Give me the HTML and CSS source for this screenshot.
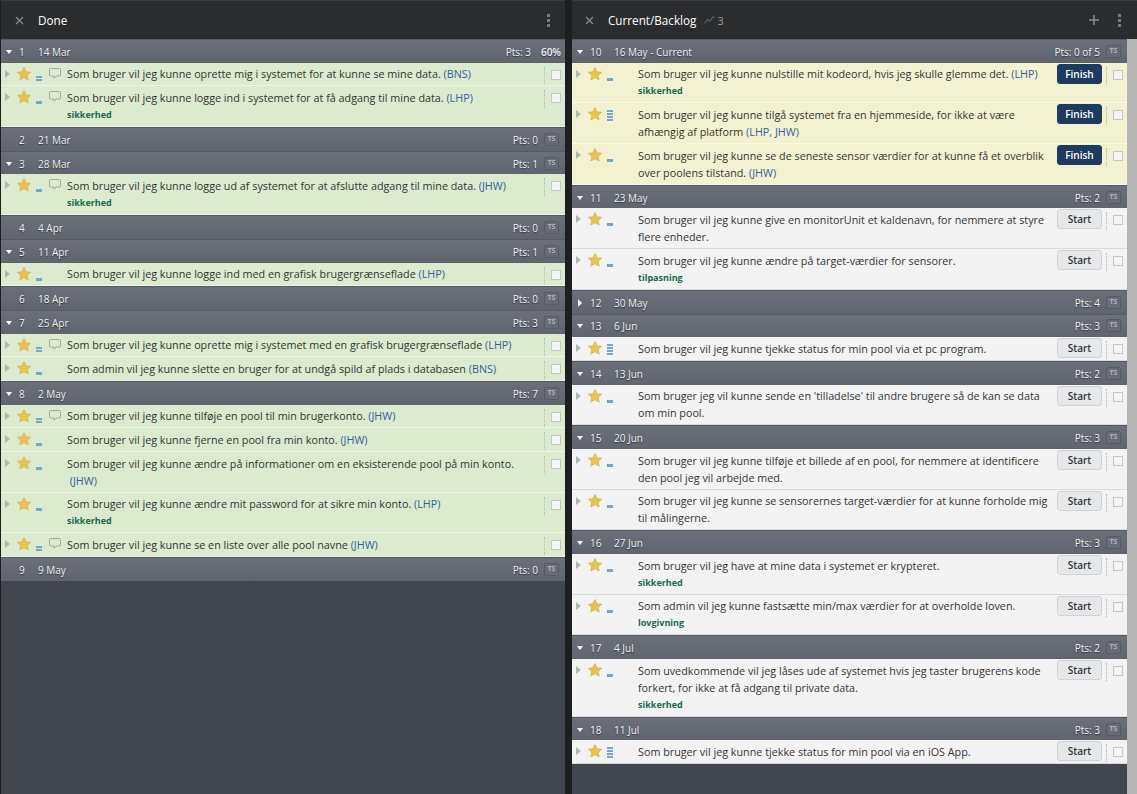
FILE: index.html
```html
<!DOCTYPE html>
<html lang="en">
<head>
    <meta charset="UTF-8">
    <title>Planning board</title>
    <link rel="stylesheet" href="styles.css">
</head>
<body>
    <svg class="defs" width="0" height="0">
        <symbol id="star" viewBox="0 0 14 14">
            <polygon points="7,0.600 9,4.800 13.600,5.300 10.200,8.400 11.200,13 7,10.700 2.800,13 3.800,8.400 0.400,5.300 5,4.800" fill="#e6c452" stroke="#d8b545" stroke-width="0.800" stroke-linejoin="round"/>
        </symbol>
        <symbol id="bubble" viewBox="0 0 12 11">
            <path d="M1.500 .5h9a1 1 0 0 1 1 1v5.500a1 1 0 0 1-1 1H7L5 10.300V8H1.500a1 1 0 0 1-1-1V1.500a1 1 0 0 1 1-1z" fill="none" stroke="#a3a8a3"/>
        </symbol>
        <symbol id="close" viewBox="0 0 9 9">
            <path d="M1 1l7 7M8 1L1 8" stroke="#8a8c90" stroke-width="1.200" fill="none"/>
        </symbol>
    </svg>

    <div class="board">
        <section class="panel panel-done">
            <header class="panel-head">
                <svg class="head-close"><use href="#close"/></svg>
                <span class="panel-title">Done</span>
                <span class="kebab"><i></i><i></i><i></i></span>
            </header>
            <div class="panel-body">
                <div class="sprint-list">
                    <div class="sprint-head"><span class="caret-down"></span><span class="num">1</span><span class="date">14 Mar</span><span class="pts">Pts: 3</span><span class="pct">60%</span></div>
                    <div class="row green"><span class="arrow"></span><svg class="star"><use href="#star"/></svg><span class="est"><i></i><i></i></span><svg class="bubble"><use href="#bubble"/></svg><div class="row-body">Som bruger vil jeg kunne oprette mig i systemet for at kunne se mine data. <a>(BNS)</a></div><span class="dots"></span><span class="check"></span></div>
                    <div class="row green"><span class="arrow"></span><svg class="star"><use href="#star"/></svg><span class="est"><i></i></span><svg class="bubble"><use href="#bubble"/></svg><div class="row-body">Som bruger vil jeg kunne logge ind i systemet for at få adgang til mine data. <a>(LHP)</a><div class="tag">sikkerhed</div></div><span class="dots"></span><span class="check"></span></div>

                    <div class="sprint-head closed"><span class="caret-none"></span><span class="num">2</span><span class="date">21 Mar</span><span class="pts">Pts: 0</span><span class="ts">TS</span></div>

                    <div class="sprint-head"><span class="caret-down"></span><span class="num">3</span><span class="date">28 Mar</span><span class="pts">Pts: 1</span><span class="ts">TS</span></div>
                    <div class="row green"><span class="arrow"></span><svg class="star"><use href="#star"/></svg><span class="est"><i></i></span><svg class="bubble"><use href="#bubble"/></svg><div class="row-body">Som bruger vil jeg kunne logge ud af systemet for at afslutte adgang til mine data. <a>(JHW)</a><div class="tag">sikkerhed</div></div><span class="dots"></span><span class="check"></span></div>

                    <div class="sprint-head closed"><span class="caret-none"></span><span class="num">4</span><span class="date">4 Apr</span><span class="pts">Pts: 0</span><span class="ts">TS</span></div>

                    <div class="sprint-head"><span class="caret-down"></span><span class="num">5</span><span class="date">11 Apr</span><span class="pts">Pts: 1</span><span class="ts">TS</span></div>
                    <div class="row green"><span class="arrow"></span><svg class="star"><use href="#star"/></svg><span class="est"><i></i></span><span class="no-bubble"></span><div class="row-body">Som bruger vil jeg kunne logge ind med en grafisk brugergrænseflade <a>(LHP)</a></div><span class="dots"></span><span class="check"></span></div>

                    <div class="sprint-head closed"><span class="caret-none"></span><span class="num">6</span><span class="date">18 Apr</span><span class="pts">Pts: 0</span><span class="ts">TS</span></div>

                    <div class="sprint-head"><span class="caret-down"></span><span class="num">7</span><span class="date">25 Apr</span><span class="pts">Pts: 3</span><span class="ts">TS</span></div>
                    <div class="row green"><span class="arrow"></span><svg class="star"><use href="#star"/></svg><span class="est"><i></i><i></i></span><svg class="bubble"><use href="#bubble"/></svg><div class="row-body">Som bruger vil jeg kunne oprette mig i systemet med en grafisk brugergrænseflade <a>(LHP)</a></div><span class="dots"></span><span class="check"></span></div>
                    <div class="row green"><span class="arrow"></span><svg class="star"><use href="#star"/></svg><span class="est"><i></i></span><span class="no-bubble"></span><div class="row-body">Som admin vil jeg kunne slette en bruger for at undgå spild af plads i databasen <a>(BNS)</a></div><span class="dots"></span><span class="check"></span></div>

                    <div class="sprint-head"><span class="caret-down"></span><span class="num">8</span><span class="date">2 May</span><span class="pts">Pts: 7</span><span class="ts">TS</span></div>
                    <div class="row green"><span class="arrow"></span><svg class="star"><use href="#star"/></svg><span class="est"><i></i><i></i></span><svg class="bubble"><use href="#bubble"/></svg><div class="row-body">Som bruger vil jeg kunne tilføje en pool til min brugerkonto. <a>(JHW)</a></div><span class="dots"></span><span class="check"></span></div>
                    <div class="row green"><span class="arrow"></span><svg class="star"><use href="#star"/></svg><span class="est"><i></i></span><span class="no-bubble"></span><div class="row-body">Som bruger vil jeg kunne fjerne en pool fra min konto. <a>(JHW)</a></div><span class="dots"></span><span class="check"></span></div>
                    <div class="row green"><span class="arrow"></span><svg class="star"><use href="#star"/></svg><span class="est"><i></i></span><span class="no-bubble"></span><div class="row-body">Som bruger vil jeg kunne ændre på informationer om en eksisterende pool på min konto. &nbsp;<a>(JHW)</a></div><span class="dots"></span><span class="check"></span></div>
                    <div class="row green"><span class="arrow"></span><svg class="star"><use href="#star"/></svg><span class="est"><i></i></span><span class="no-bubble"></span><div class="row-body">Som bruger vil jeg kunne ændre mit password for at sikre min konto. <a>(LHP)</a><div class="tag">sikkerhed</div></div><span class="dots"></span><span class="check"></span></div>
                    <div class="row green"><span class="arrow"></span><svg class="star"><use href="#star"/></svg><span class="est"><i></i><i></i></span><svg class="bubble"><use href="#bubble"/></svg><div class="row-body">Som bruger vil jeg kunne se en liste over alle pool navne <a>(JHW)</a></div><span class="dots"></span><span class="check"></span></div>

                    <div class="sprint-head closed"><span class="caret-none"></span><span class="num">9</span><span class="date">9 May</span><span class="pts">Pts: 0</span><span class="ts">TS</span></div>
                </div>
            </div>
        </section>

        <section class="panel panel-backlog">
            <header class="panel-head">
                <svg class="head-close"><use href="#close"/></svg>
                <span class="panel-title">Current/Backlog</span>
                <svg class="velocity" viewBox="0 0 11 8"><path d="M.5 7.500L3.500 3l2 2.500L9 1l1.500 1" fill="none" stroke="#55575b" stroke-width="1.300"/></svg>
                <span class="velocity-num">3</span>
                <svg class="plus" viewBox="0 0 10 10"><path d="M5 0v10M0 5h10" stroke="#8a8c90" stroke-width="1.500"/></svg>
                <span class="kebab"><i></i><i></i><i></i></span>
            </header>
            <div class="panel-body">
                <div class="sprint-list">
                    <div class="sprint-head"><span class="caret-down"></span><span class="num">10</span><span class="date">16 May - Current</span><span class="pts">Pts: 0 of 5</span><span class="ts">TS</span></div>
                    <div class="row yellow"><span class="arrow"></span><svg class="star"><use href="#star"/></svg><span class="est"><i></i></span><span class="no-bubble"></span><div class="row-body">Som bruger vil jeg kunne nulstille mit kodeord, hvis jeg skulle glemme det. <a>(LHP)</a><div class="tag">sikkerhed</div></div><span class="btn btn-finish">Finish</span><span class="dots"></span><span class="check"></span></div>
                    <div class="row yellow"><span class="arrow"></span><svg class="star"><use href="#star"/></svg><span class="est"><i></i><i></i><i></i><i></i></span><span class="no-bubble"></span><div class="row-body">Som bruger vil jeg kunne tilgå systemet fra en hjemmeside, for ikke at være afhængig af platform <a>(LHP, JHW)</a></div><span class="btn btn-finish">Finish</span><span class="dots"></span><span class="check"></span></div>
                    <div class="row yellow"><span class="arrow"></span><svg class="star"><use href="#star"/></svg><span class="est"><i></i></span><span class="no-bubble"></span><div class="row-body">Som bruger vil jeg kunne se de seneste sensor værdier for at kunne få et overblik over poolens tilstand. <a>(JHW)</a></div><span class="btn btn-finish">Finish</span><span class="dots"></span><span class="check"></span></div>

                    <div class="sprint-head"><span class="caret-down"></span><span class="num">11</span><span class="date">23 May</span><span class="pts">Pts: 2</span><span class="ts">TS</span></div>
                    <div class="row plain"><span class="arrow"></span><svg class="star"><use href="#star"/></svg><span class="est"><i></i></span><span class="no-bubble"></span><div class="row-body">Som bruger vil jeg kunne give en monitorUnit et kaldenavn, for nemmere at styre flere enheder.</div><span class="btn">Start</span><span class="dots"></span><span class="check"></span></div>
                    <div class="row plain"><span class="arrow"></span><svg class="star"><use href="#star"/></svg><span class="est"><i></i></span><span class="no-bubble"></span><div class="row-body">Som bruger vil jeg kunne ændre på target-værdier for sensorer.<div class="tag">tilpasning</div></div><span class="btn">Start</span><span class="dots"></span><span class="check"></span></div>

                    <div class="sprint-head closed"><span class="caret-right"></span><span class="num">12</span><span class="date">30 May</span><span class="pts">Pts: 4</span><span class="ts">TS</span></div>

                    <div class="sprint-head"><span class="caret-down"></span><span class="num">13</span><span class="date">6 Jun</span><span class="pts">Pts: 3</span><span class="ts">TS</span></div>
                    <div class="row plain"><span class="arrow"></span><svg class="star"><use href="#star"/></svg><span class="est"><i></i><i></i><i></i><i></i></span><span class="no-bubble"></span><div class="row-body">Som bruger vil jeg kunne tjekke status for min pool via et pc program.</div><span class="btn">Start</span><span class="dots"></span><span class="check"></span></div>

                    <div class="sprint-head"><span class="caret-down"></span><span class="num">14</span><span class="date">13 Jun</span><span class="pts">Pts: 2</span><span class="ts">TS</span></div>
                    <div class="row plain"><span class="arrow"></span><svg class="star"><use href="#star"/></svg><span class="est"><i></i></span><span class="no-bubble"></span><div class="row-body">Som bruger jeg vil kunne sende en 'tilladelse' til andre brugere så de kan se data om min pool.</div><span class="btn">Start</span><span class="dots"></span><span class="check"></span></div>

                    <div class="sprint-head"><span class="caret-down"></span><span class="num">15</span><span class="date">20 Jun</span><span class="pts">Pts: 3</span><span class="ts">TS</span></div>
                    <div class="row plain"><span class="arrow"></span><svg class="star"><use href="#star"/></svg><span class="est"><i></i></span><span class="no-bubble"></span><div class="row-body">Som bruger vil jeg kunne tilføje et billede af en pool, for nemmere at identificere den pool jeg vil arbejde med.</div><span class="btn">Start</span><span class="dots"></span><span class="check"></span></div>
                    <div class="row plain"><span class="arrow"></span><svg class="star"><use href="#star"/></svg><span class="est"><i></i></span><span class="no-bubble"></span><div class="row-body">Som bruger vil jeg kunne se sensorernes target-værdier for at kunne forholde mig til målingerne.</div><span class="btn">Start</span><span class="dots"></span><span class="check"></span></div>

                    <div class="sprint-head"><span class="caret-down"></span><span class="num">16</span><span class="date">27 Jun</span><span class="pts">Pts: 3</span><span class="ts">TS</span></div>
                    <div class="row plain"><span class="arrow"></span><svg class="star"><use href="#star"/></svg><span class="est"><i></i></span><span class="no-bubble"></span><div class="row-body">Som bruger vil jeg have at mine data i systemet er krypteret.<div class="tag">sikkerhed</div></div><span class="btn">Start</span><span class="dots"></span><span class="check"></span></div>
                    <div class="row plain"><span class="arrow"></span><svg class="star"><use href="#star"/></svg><span class="est"><i></i></span><span class="no-bubble"></span><div class="row-body">Som admin vil jeg kunne fastsætte min/max værdier for at overholde loven.<div class="tag">lovgivning</div></div><span class="btn">Start</span><span class="dots"></span><span class="check"></span></div>

                    <div class="sprint-head"><span class="caret-down"></span><span class="num">17</span><span class="date">4 Jul</span><span class="pts">Pts: 2</span><span class="ts">TS</span></div>
                    <div class="row plain"><span class="arrow"></span><svg class="star"><use href="#star"/></svg><span class="est"><i></i></span><span class="no-bubble"></span><div class="row-body">Som uvedkommende vil jeg låses ude af systemet hvis jeg taster brugerens kode forkert, for ikke at få adgang til private data.<div class="tag">sikkerhed</div></div><span class="btn">Start</span><span class="dots"></span><span class="check"></span></div>

                    <div class="sprint-head"><span class="caret-down"></span><span class="num">18</span><span class="date">11 Jul</span><span class="pts">Pts: 3</span><span class="ts">TS</span></div>
                    <div class="row plain"><span class="arrow"></span><svg class="star"><use href="#star"/></svg><span class="est"><i></i><i></i><i></i><i></i></span><span class="no-bubble"></span><div class="row-body">Som bruger vil jeg kunne tjekke status for min pool via en iOS App.</div><span class="btn">Start</span><span class="dots"></span><span class="check"></span></div>
                </div>
                <div class="scrollbar"></div>
            </div>
        </section>
    </div>
</body>
</html>
```

FILE: styles.css
```css
html, body {
    margin: 0;
    height: 100%;
    overflow: hidden;
}
body {
    font-family: "Open Sans", "Liberation Sans", sans-serif;
    font-size: 10.780px;
    color: #333;
    background-color: #1d1e20;
}
.defs {
    display: block;
    height: 0;
}
.board {
    display: flex;
    gap: 7px;
    height: 794px;
    padding-left: 1px;
}
.panel {
    display: flex;
    flex-direction: column;
    background-color: #42474f;
}
.panel-done {
    width: 564px;
}
.panel-backlog {
    width: 565px;
}

/* top bar */
.panel-head {
    display: flex;
    align-items: center;
    height: 38px;
    border-top: 1px solid #3a3b3d;
    background-color: #2b2c2e;
    flex: none;
}
.head-close {
    width: 9px;
    height: 9px;
    margin-left: 14px;
    flex: none;
}
.panel-title {
    margin-left: 14px;
    font-size: 11.700px;
    color: #fff;
}
.panel-backlog .panel-title {
    margin-left: 14px;
}
.panel-backlog .head-close {
    margin-left: 13px;
}
.kebab {
    display: flex;
    flex-direction: column;
    gap: 2px;
    margin-left: auto;
    margin-right: 15px;
}
.kebab i {
    display: block;
    width: 3px;
    height: 3px;
    background-color: #77797d;
}
.velocity {
    width: 11px;
    height: 8px;
    margin-left: 8px;
}
.velocity-num {
    margin-left: 2px;
    color: #9a9ca0;
}
.plus {
    width: 10px;
    height: 10px;
    margin-left: auto;
}
.plus + .kebab {
    margin-left: 19px;
    margin-right: 16px;
}

.panel-body {
    display: flex;
    flex: 1;
    min-height: 0;
}
.sprint-list {
    flex: 1;
    min-width: 0;
}
.scrollbar {
    width: 10px;
    background-color: #b5b5b5;
    flex: none;
}

/* sprint header */
.sprint-head {
    display: flex;
    align-items: center;
    height: 23.700px;
    box-sizing: border-box;
    border-top: 1px solid #555a63;
    background: linear-gradient(#6a6f7a, #5f646f);
    color: #f0f2f4;
    font-size: 10px;
    text-shadow: 0 1px 1px rgba(0, 0, 0, 0.5);
    padding: 1px 6px 0 0;
}
.caret-down, .caret-right, .caret-none {
    width: 6px;
    margin-left: 5px;
    flex: none;
}
.caret-down {
    height: 0;
    border-top: 4px solid #fff;
    border-left: 3.500px solid transparent;
    border-right: 3.500px solid transparent;
    width: 0;
}
.caret-right {
    height: 0;
    width: 0;
    margin-left: 6px;
    margin-right: 1px;
    border-left: 4px solid #fff;
    border-top: 4px solid transparent;
    border-bottom: 4px solid transparent;
}
.num {
    width: 19px;
    margin-left: 7px;
    flex: none;
}
.panel-backlog .num {
    width: 24px;
}
.date {
    flex: 1;
}
.pts {
    margin-right: 6px;
}
.pct {
    margin-left: 4px;
    margin-right: -2px;
    font-weight: 600;
}
.ts {
    box-sizing: border-box;
    width: 15px;
    height: 13px;
    margin-top: -1px;
    border: 1px solid #555a66;
    border-radius: 2px;
    background-color: #666b76;
    color: #b0b4ba;
    font-size: 7px;
    font-weight: 700;
    line-height: 10px;
    text-align: center;
    text-shadow: none;
}

/* story rows */
.row {
    display: flex;
    align-items: flex-start;
    box-sizing: border-box;
    border-bottom: 1px solid #fbfcf7;
    padding: 0 4px 0 4px;
    line-height: 17px;
}
.green {
    background-color: #dcebd0;
    border-bottom-color: #eef5e7;
}
.yellow {
    background-color: #f3f2d0;
    border-bottom-color: #fbfaec;
}
.plain {
    background-color: #f3f3f3;
    border-bottom-color: #d9d9d9;
}
.arrow {
    width: 0;
    height: 0;
    margin-top: 7px;
    border-left: 5px solid #b2b6b0;
    border-top: 4px solid transparent;
    border-bottom: 4px solid transparent;
    flex: none;
}
.star {
    width: 14px;
    height: 14px;
    margin: 4px 0 0 7px;
    flex: none;
}
.est {
    display: flex;
    flex-direction: column;
    justify-content: flex-end;
    gap: 1px;
    width: 6px;
    height: 18px;
    margin-left: 5px;
    flex: none;
}
.est i {
    display: block;
    height: 2px;
    background-color: #7ba4cb;
}
.est i:only-child {
    height: 3px;
}
.bubble, .no-bubble {
    width: 12px;
    height: 11px;
    margin: 5px 0 0 7px;
    flex: none;
}
.row-body {
    flex: 1;
    min-width: 0;
    padding: 2.700px 25px 3px 6px;
}
.panel-backlog .row-body {
    padding-right: 5px;
}
.row-body a {
    color: #34609a;
}
.tag {
    color: #176a4f;
    font-size: 9px;
    font-weight: 700;
}
.btn {
    box-sizing: border-box;
    width: 45px;
    height: 20px;
    margin-top: 1px;
    border: 1px solid #d0d2d6;
    border-radius: 3px;
    background-color: #e6e7eb;
    color: #333;
    font-size: 10px;
    font-weight: 600;
    line-height: 18px;
    text-align: center;
    flex: none;
}
.btn-finish {
    border-color: #1e3a5f;
    background-color: #1e3a5f;
    color: #fff;
}
.dots {
    width: 0;
    height: 18px;
    margin: 4px 6px 0 4px;
    border-left: 1px dotted #b5b8b0;
    flex: none;
}
.check {
    box-sizing: border-box;
    width: 10px;
    height: 10px;
    margin-top: 7px;
    border: 1px solid #c6c6c6;
    background-color: #f5f5f5;
    flex: none;
}
```
